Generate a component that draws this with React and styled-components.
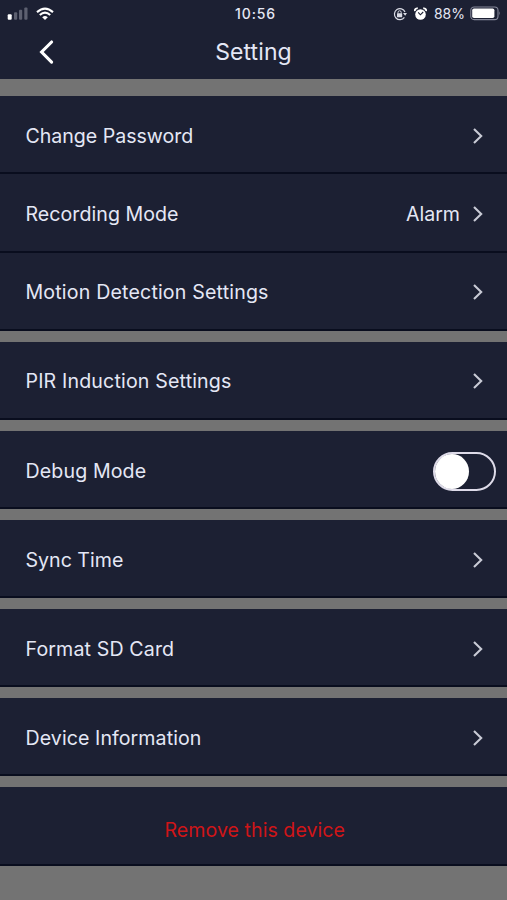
import React, { useState } from 'react';
import styled, { createGlobalStyle, ThemeProvider } from 'styled-components';

const theme = {
  colors: {
    background: '#737373',
    panel: '#1c2033',
    line: '#090d1e',
    text: '#e4e7f5',
    chevron: '#c9cbd6',
    danger: '#cf1518',
  },
  font: 'Inter, "Liberation Sans", sans-serif',
};

const GlobalStyle = createGlobalStyle`
  * {
    box-sizing: border-box;
  }

  body {
    margin: 0;
    background: ${theme.colors.background};
    font-family: ${theme.font};
  }
`;

const Screen = styled.div`
  width: 507px;
  height: 900px;
  overflow: hidden;
  background: ${({ theme }) => theme.colors.background};
  color: ${({ theme }) => theme.colors.text};
`;

const Header = styled.header`
  height: 79px;
  background: ${({ theme }) => theme.colors.panel};
`;

const StatusBar = styled.div`
  display: grid;
  grid-template-columns: 1fr auto 1fr;
  align-items: center;
  height: 27px;
  padding: 0 5px 0 7px;
`;

const StatusGroup = styled.div`
  display: flex;
  align-items: center;
  justify-content: ${({ $end }) => ($end ? 'flex-end' : 'flex-start')};
  gap: ${({ $gap }) => $gap}px;
`;

const Clock = styled.time`
  padding-left: 2px;
  font-size: 14px;
  font-weight: 500;
  letter-spacing: 0.85px;
`;

const Percent = styled.span`
  font-size: 14px;
  margin-right: -2px;
`;

const NavBar = styled.div`
  display: grid;
  grid-template-columns: 1fr auto 1fr;
  align-items: center;
  height: 49px;
`;

const BackButton = styled.button`
  justify-self: start;
  display: flex;
  margin-left: 37px;
  padding: 0;
  border: 0;
  background: none;
`;

const Title = styled.h1`
  margin: 0;
  font-size: 23px;
  font-weight: 400;
  letter-spacing: 0.1px;
  line-height: 28px;
`;

const List = styled.main`
  display: flex;
  flex-direction: column;
  gap: 11px;
  margin-top: 17.3px;
`;

const Row = styled.div`
  display: flex;
  align-items: center;
  justify-content: ${({ $center }) => ($center ? 'center' : 'space-between')};
  height: 78.15px;
  padding: ${({ $toggle }) => ($toggle ? '4px 11px 0 25.5px' : '3.4px 23px 0 25.5px')};
  border-bottom: 2px solid ${({ theme }) => theme.colors.line};
  background: ${({ theme }) => theme.colors.panel};
`;

const Label = styled.span`
  font-size: 19.6px;
  line-height: 26px;
  letter-spacing: ${({ $tracking = 0 }) => $tracking}px;
  white-space: nowrap;
`;

const Value = styled.div`
  display: flex;
  align-items: center;
  gap: 12px;
`;

const Remove = styled(Label)`
  padding-top: 6px;
  color: ${({ theme }) => theme.colors.danger};
`;

const Switch = styled.button`
  display: flex;
  align-items: center;
  justify-content: ${({ $on }) => ($on ? 'flex-end' : 'flex-start')};
  width: 63px;
  height: 39px;
  margin-top: 1px;
  padding: 0;
  border: 2px solid #dedbe9;
  border-radius: 20px;
  background: ${({ theme }) => theme.colors.panel};
`;

const Knob = styled.span`
  width: 34px;
  height: 35px;
  border-radius: 50%;
  background: #fff;
`;

const Signal = () => (
  <svg width="21" height="14" viewBox="0 0 21 14">
    <rect x="0.7" y="7.2" width="4" height="5.5" rx="1" fill="#fff" />
    <rect x="7" y="5.2" width="3.2" height="7.5" rx="1" fill="#5d6070" />
    <rect x="12" y="2.8" width="3.2" height="9.9" rx="1" fill="#5d6070" />
    <rect x="17.3" y="0.6" width="3.2" height="12.1" rx="1" fill="#5d6070" />
  </svg>
);

const Wifi = () => (
  <svg width="18" height="14" viewBox="0 0 18 14" fill="none" stroke="#fff" strokeWidth="2.1">
    <path d="M1 5.1Q9-1.9 17 5.1" />
    <path d="M3.8 8Q9 3.4 14.2 8" />
    <path d="M6.2 10.2Q9 7.7 11.8 10.2L9 13Z" fill="#fff" stroke="none" />
  </svg>
);

const RotationLock = () => (
  <svg width="14" height="14" viewBox="0 0 14 14" fill="none" stroke="#d9dbe5">
    <path d="M11.4 10.4A5.5 5.5 0 1 1 12 5" strokeWidth="1.2" />
    <path d="M10 6H14L12.2 8.8Z" fill="#d9dbe5" stroke="none" />
    <rect x="4" y="6.2" width="5.2" height="4" rx="0.5" fill="#d9dbe5" stroke="none" />
    <path d="M5 6.5V5.4a1.6 1.6 0 0 1 3.2 0v1.1" strokeWidth="1" />
  </svg>
);

const Alarm = () => (
  <svg width="13" height="14" viewBox="0 0 13 14">
    <circle cx="6.5" cy="7.5" r="5.3" fill="#fff" />
    <path d="M0.9 4.1A2.3 2.3 0 0 1 3.8 1.4M12.1 4.1A2.3 2.3 0 0 0 9.2 1.4" fill="none" stroke="#fff" strokeWidth="1.8" />
    <path d="M4.2 5.4L6.4 7.8L9.2 5" fill="none" stroke="#1c2033" strokeWidth="1.1" />
  </svg>
);

const Battery = () => (
  <svg width="32" height="15" viewBox="0 0 32 15">
    <rect x="0.8" y="1" width="27.2" height="12.6" rx="3.4" fill="none" stroke="#85889a" strokeWidth="1.1" />
    <rect x="2.2" y="2.5" width="22.2" height="9.6" rx="1.8" fill="#fff" />
    <path d="M29.4 5.2Q31 7.3 29.4 9.4Z" fill="#85889a" />
  </svg>
);

const BackIcon = () => (
  <svg width="18" height="26" viewBox="0 0 18 26" fill="none" stroke="#fff" strokeWidth="3.1">
    <path d="M14.6 3L4.6 13L14.6 23.2" strokeLinecap="round" />
  </svg>
);

const Chevron = () => (
  <svg width="12" height="18" viewBox="0 0 12 18" fill="none">
    <path d="M2 2L9.2 9L2 16" stroke={theme.colors.chevron} strokeWidth="2.1" />
  </svg>
);

const sections = [
  [
    { label: 'Change Password', tracking: -0.03 },
    { label: 'Recording Mode', value: 'Alarm', tracking: 0.04 },
    { label: 'Motion Detection Settings', tracking: 0.17 },
  ],
  [{ label: 'PIR Induction Settings', tracking: 0.16 }],
  [{ label: 'Debug Mode', toggle: true, tracking: 0.12 }],
  [{ label: 'Sync Time' }],
  [{ label: 'Format SD Card', tracking: 0.13 }],
  [{ label: 'Device Information', tracking: 0.07 }],
];

const SettingRow = ({ label, value, toggle, tracking }) => {
  const [on, setOn] = useState(false);

  return (
    <Row $toggle={toggle}>
      <Label $tracking={tracking}>{label}</Label>
      {toggle ? (
        <Switch $on={on} role="switch" aria-checked={on} aria-label={label} onClick={() => setOn(!on)}>
          <Knob />
        </Switch>
      ) : (
        <Value>
          {value && <Label>{value}</Label>}
          <Chevron />
        </Value>
      )}
    </Row>
  );
};

const App = () => {
  return (
    <ThemeProvider theme={theme}>
      <GlobalStyle />
      <Screen>
        <Header>
          <StatusBar>
            <StatusGroup $gap={8}>
              <Signal />
              <Wifi />
            </StatusGroup>
            <Clock>10:56</Clock>
            <StatusGroup $end $gap={7}>
              <RotationLock />
              <Alarm />
              <Percent>88%</Percent>
              <Battery />
            </StatusGroup>
          </StatusBar>
          <NavBar>
            <BackButton aria-label="Back">
              <BackIcon />
            </BackButton>
            <Title>Setting</Title>
          </NavBar>
        </Header>

        <List>
          {sections.map((rows) => (
            <section key={rows[0].label}>
              {rows.map((row) => (
                <SettingRow key={row.label} {...row} />
              ))}
            </section>
          ))}
          <Row $center>
            <Remove $tracking={0.04}>Remove this device</Remove>
          </Row>
        </List>
      </Screen>
    </ThemeProvider>
  );
};

export default App;
